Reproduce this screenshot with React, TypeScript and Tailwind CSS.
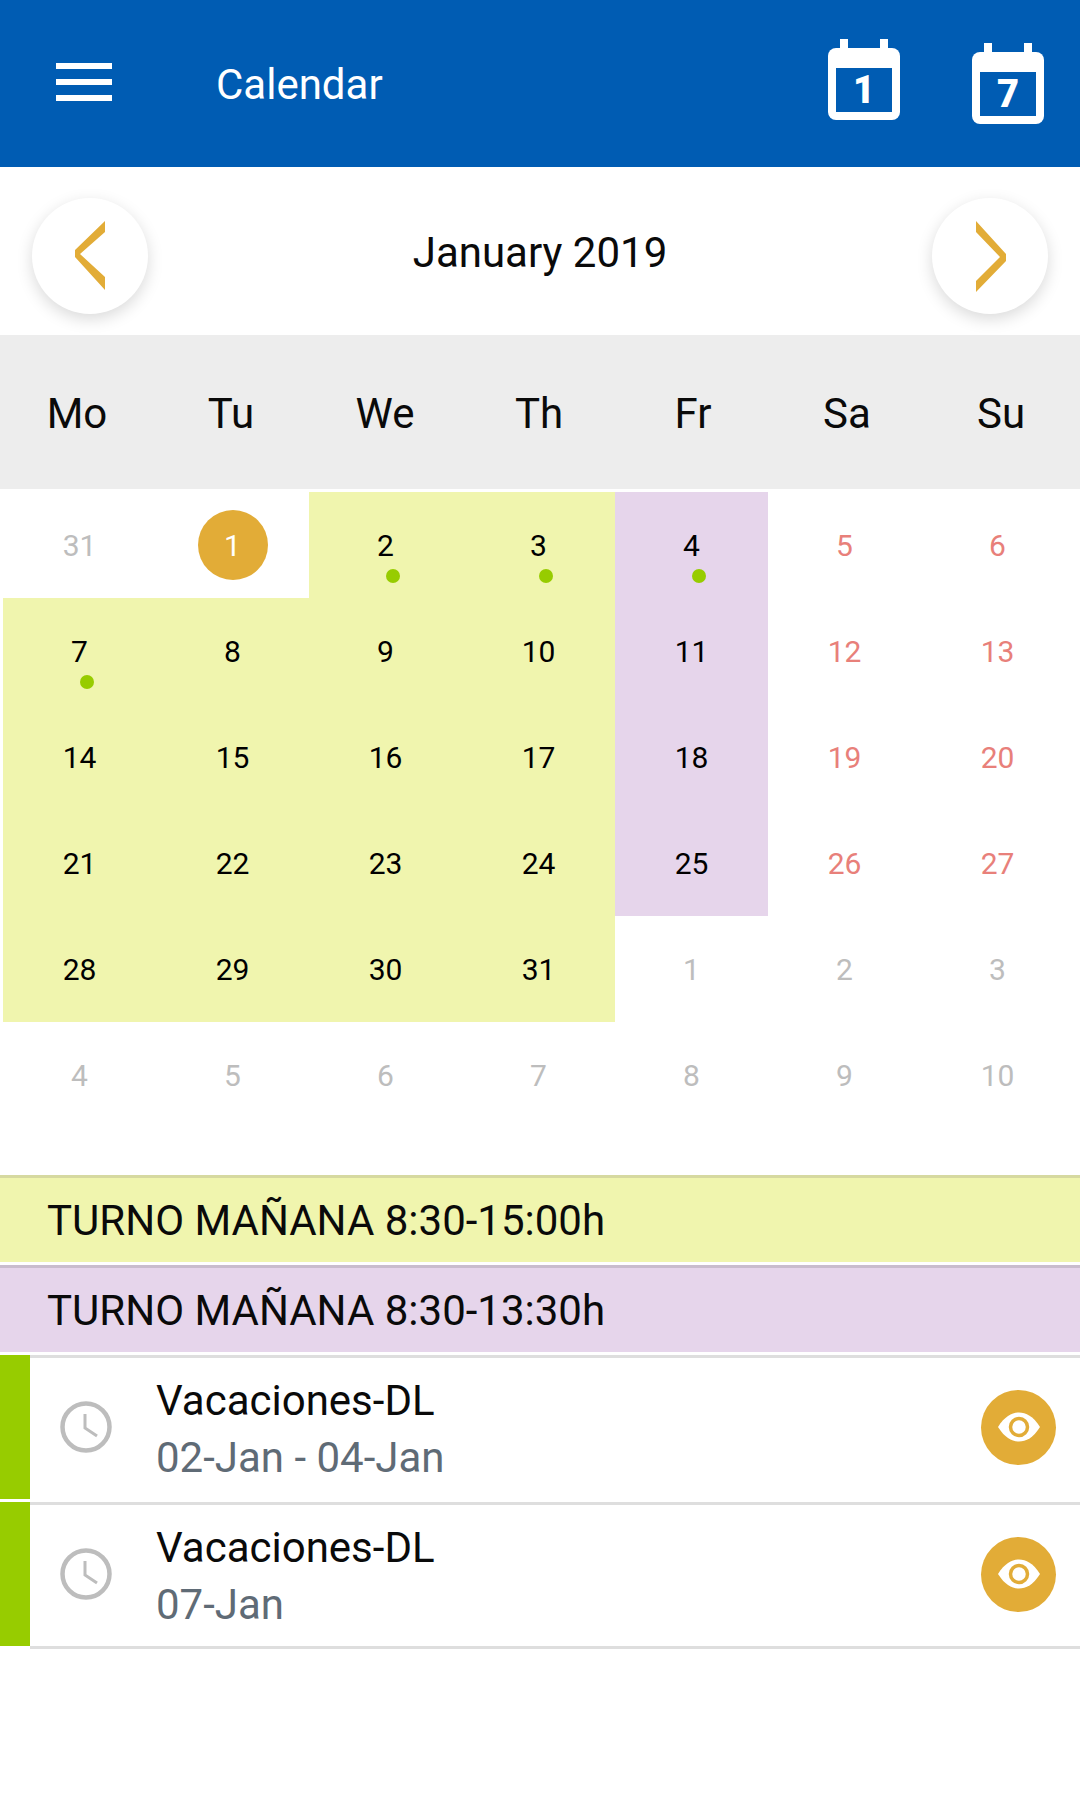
import React from "react";

const WEEKDAYS = ["Mo", "Tu", "We", "Th", "Fr", "Sa", "Su"];

type Day = { n: number; kind?: "muted" | "today" | "red"; bg?: "yellow" | "purple"; dot?: boolean };

const WEEKS: Day[][] = [
    [
        { n: 31, kind: "muted" },
        { n: 1, kind: "today" },
        { n: 2, bg: "yellow", dot: true },
        { n: 3, bg: "yellow", dot: true },
        { n: 4, bg: "purple", dot: true },
        { n: 5, kind: "red" },
        { n: 6, kind: "red" },
    ],
    [
        { n: 7, bg: "yellow", dot: true },
        { n: 8, bg: "yellow" },
        { n: 9, bg: "yellow" },
        { n: 10, bg: "yellow" },
        { n: 11, bg: "purple" },
        { n: 12, kind: "red" },
        { n: 13, kind: "red" },
    ],
    [
        { n: 14, bg: "yellow" },
        { n: 15, bg: "yellow" },
        { n: 16, bg: "yellow" },
        { n: 17, bg: "yellow" },
        { n: 18, bg: "purple" },
        { n: 19, kind: "red" },
        { n: 20, kind: "red" },
    ],
    [
        { n: 21, bg: "yellow" },
        { n: 22, bg: "yellow" },
        { n: 23, bg: "yellow" },
        { n: 24, bg: "yellow" },
        { n: 25, bg: "purple" },
        { n: 26, kind: "red" },
        { n: 27, kind: "red" },
    ],
    [
        { n: 28, bg: "yellow" },
        { n: 29, bg: "yellow" },
        { n: 30, bg: "yellow" },
        { n: 31, bg: "yellow" },
        { n: 1, kind: "muted" },
        { n: 2, kind: "muted" },
        { n: 3, kind: "muted" },
    ],
    [
        { n: 4, kind: "muted" },
        { n: 5, kind: "muted" },
        { n: 6, kind: "muted" },
        { n: 7, kind: "muted" },
        { n: 8, kind: "muted" },
        { n: 9, kind: "muted" },
        { n: 10, kind: "muted" },
    ],
];

const CalendarIcon = ({ label }: { label: string }) => (
    <svg width="72" height="81" viewBox="0 0 72 81">
        <rect x="12" y="0" width="8" height="12" fill="#fff" />
        <rect x="52" y="0" width="8" height="12" fill="#fff" />
        <rect x="0" y="9" width="72" height="72" rx="8" fill="#fff" />
        <rect x="8" y="29" width="56" height="44" fill="#005cb3" />
        <text x="36" y="64" textAnchor="middle" fontSize="38" fontWeight="900" fill="#fff" fontFamily="Roboto, sans-serif">
            {label}
        </text>
    </svg>
);

const NavButton = ({ dir }: { dir: "prev" | "next" }) => (
    <button className="w-[116px] h-[116px] rounded-full bg-white shadow-[0_5px_16px_rgba(0,0,0,0.15)] flex items-center justify-center">
        <svg width="31" height="72" viewBox="0 0 31 72" className="mt-[1px]">
            {dir === "prev" ? (
                <path d="M30 0 V11 L5 33 L30 56 V69 L0 36 V29 Z" fill="#e2ac37" />
            ) : (
                <path d="M1 0 V11 L25 36 L1 60 V71 L31 40 V33 Z" fill="#e2ac37" />
            )}
        </svg>
    </button>
);

const DayCell = ({ day }: { day: Day }) => {
    const bg = day.bg === "yellow" ? "bg-[#f0f5ae]" : day.bg === "purple" ? "bg-[#e6d5eb]" : "bg-white";
    const color =
        day.kind === "muted" ? "text-[#bdbdbd]" : day.kind === "red" ? "text-[#e8807a]" : "text-black";
    return (
        <div className={`relative h-[106px] flex items-center justify-center ${bg}`}>
            {day.kind === "today" ? (
                <div className="w-[70px] h-[70px] rounded-full bg-[#e2ac37] flex items-center justify-center text-white text-[30px]">
                    {day.n}
                </div>
            ) : (
                <span className={`text-[30px] ${color}`}>{day.n}</span>
            )}
            {day.dot && <span className="absolute top-[77px] left-[77px] w-[14px] h-[14px] rounded-full bg-[#97cc00]" />}
        </div>
    );
};

const ShiftBar = ({ label, className }: { label: string; className: string }) => (
    <div className={`h-[87px] border-t-[3px] pl-[47px] flex items-center text-[42px] text-[#0a0a0a] ${className}`}>
        {label}
    </div>
);

const EventRow = ({ range, last }: { range: string; last?: boolean }) => (
    <div className="flex h-[147px]">
        <div className="w-[30px] h-[144px] bg-[#97cc00]" />
        <div
            className={`flex-1 flex items-center pb-[3px] border-t-[3px] border-b-[3px] border-t-[#dedede] ${
                last ? "border-b-[#dedede]" : "border-b-transparent"
            }`}
        >
            <svg width="52" height="52" viewBox="0 0 52 52" className="ml-[30px]">
                <circle cx="26" cy="26" r="23.5" fill="none" stroke="#bdbdbd" strokeWidth="4.5" />
                <path d="M25 13 V27 L37 35" fill="none" stroke="#bdbdbd" strokeWidth="3" />
            </svg>
            <div className="ml-[44px] mt-[4px] flex-1">
                <div className="text-[42px] leading-[57px] text-[#0a0a0a]">Vacaciones-DL</div>
                <div className="text-[42px] leading-[57px] text-[#5f6b76]">{range}</div>
            </div>
            <div className="w-[75px] h-[75px] mr-[24px] rounded-full bg-[#e2ac37] flex items-center justify-center">
                <svg width="44" height="30" viewBox="0 0 44 30">
                    <path d="M1 15 C8 4 15 0.5 22 0.5 C29 0.5 36 4 43 15 C36 26 29 29.5 22 29.5 C15 29.5 8 26 1 15 Z" fill="#fff" />
                    <circle cx="22" cy="15" r="8.5" fill="#fff" stroke="#e2ac37" strokeWidth="3.5" />
                </svg>
            </div>
        </div>
    </div>
);

export default function App() {
    return (
        <div className="w-[1080px] h-[1813px] bg-white overflow-hidden font-['Roboto',sans-serif]">
            <header className="h-[167px] bg-[#005cb3] flex items-center text-white">
                <div className="ml-[56px] w-[56px] flex flex-col gap-[10px] -mt-[3px]">
                    <span className="h-[6px] bg-white" />
                    <span className="h-[6px] bg-white" />
                    <span className="h-[6px] bg-white" />
                </div>
                <h1 className="ml-[104px] mt-[1px] flex-1 text-[42px] font-normal">Calendar</h1>
                <div className="flex items-start gap-[72px] mr-[36px] -mt-[5px]">
                    <CalendarIcon label="1" />
                    <div className="mt-[4px]">
                        <CalendarIcon label="7" />
                    </div>
                </div>
            </header>

            <div className="h-[168px] px-[32px] pt-[10px] flex items-center justify-between">
                <NavButton dir="prev" />
                <div className="text-[42px] text-[#0a0a0a] -mt-[8px]">January 2019</div>
                <NavButton dir="next" />
            </div>

            <div className="h-[154px] bg-[#ededed] pt-[3px] pr-[2px] grid grid-cols-7 items-center">
                {WEEKDAYS.map((d) => (
                    <div key={d} className="text-center text-[42px] text-[#0a0a0a]">
                        {d}
                    </div>
                ))}
            </div>

            <div className="mt-[3px] pl-[3px] grid grid-cols-[repeat(7,153px)]">
                {WEEKS.flat().map((day, i) => (
                    <DayCell key={i} day={day} />
                ))}
            </div>

            <div className="mt-[47px] flex flex-col gap-[3px]">
                <ShiftBar label="TURNO MAÑANA 8:30-15:00h" className="bg-[#f0f5ae] border-[#d6d9a0]" />
                <ShiftBar label="TURNO MAÑANA 8:30-13:30h" className="bg-[#e6d5eb] border-[#c9bccd]" />
            </div>
            <div className="mt-[3px]">
                <EventRow range="02-Jan - 04-Jan" />
                <EventRow range="07-Jan" last />
            </div>
        </div>
    );
}
